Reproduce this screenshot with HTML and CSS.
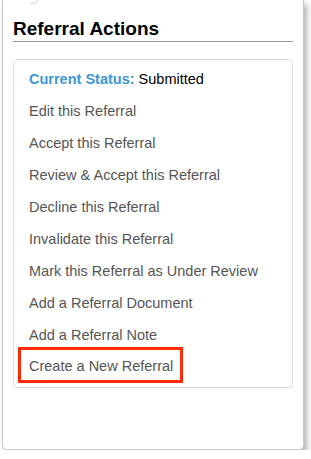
FILE: index.html
```html
<!DOCTYPE html>
<html lang="en">
<head>
    <meta charset="UTF-8">
    <meta name="viewport" content="width=device-width, initial-scale=1.0">
    <title>Referral Actions</title>
    <link rel="stylesheet" href="styles.css">
</head>
<body>
    <div class="panel">
        <span class="tab-corner"></span>
        <h2 class="panel-title">Referral Actions</h2>

        <div class="actions-box">
            <div class="action-row status-row">
                <span class="status-label">Current Status:</span> Submitted
            </div>
            <a class="action-row" href="#">Edit this Referral</a>
            <a class="action-row" href="#">Accept this Referral</a>
            <a class="action-row" href="#">Review &amp; Accept this Referral</a>
            <a class="action-row" href="#">Decline this Referral</a>
            <a class="action-row" href="#">Invalidate this Referral</a>
            <a class="action-row" href="#">Mark this Referral as Under Review</a>
            <a class="action-row" href="#">Add a Referral Document</a>
            <a class="action-row" href="#">Add a Referral Note</a>
            <a class="action-row highlighted" href="#">Create a New Referral</a>
        </div>
    </div>
</body>
</html>
```

FILE: styles.css
```css
body {
    margin: 0;
    background: #fff;
    font-family: "Liberation Sans", Arial, sans-serif;
    overflow: hidden;
}

.panel {
    position: relative;
    height: 449px;
    margin: 0 7px 0 2px;
    padding: 0 10px;
    background: #fff;
    border: 1px solid #c8c8c8;
    border-top: none;
    border-radius: 0 0 5px 5px;
    box-shadow: 3px 4px 6px rgba(0,0,0,0.3);
}

/* little rounded corner peeking in at the top */
.tab-corner {
    position: absolute;
    left: 27px;
    top: -6px;
    width: 9px;
    height: 9px;
    border-right: 1px solid #d4d4d4;
    border-bottom: 1px solid #d4d4d4;
    border-bottom-right-radius: 8px;
}

.panel-title {
    margin: 0;
    padding: 19px 0 2px;
    font-size: 19px;
    line-height: 20px;
    font-weight: bold;
    color: #000;
    border-bottom: 1px solid #999;
}

.actions-box {
    display: flex;
    flex-direction: column;
    margin-top: 17px;
    padding: 3px 15px 4px;
    border: 1px solid #ddd;
    border-radius: 4px;
}

.action-row {
    height: 32px;
    line-height: 32px;
    font-size: 14.5px;
    color: #555;
    text-decoration: none;
    white-space: nowrap;
}

.status-row {
    color: #000;
}

.status-label {
    color: #3a97d4;
    font-weight: bold;
}

.highlighted {
    align-self: flex-start;
    height: auto;
    line-height: 26px;
    margin: -4px 0 0 -11px;
    padding: 3px 7px 1px 8px;
    border: 3px solid #ff2b06;
}
```
